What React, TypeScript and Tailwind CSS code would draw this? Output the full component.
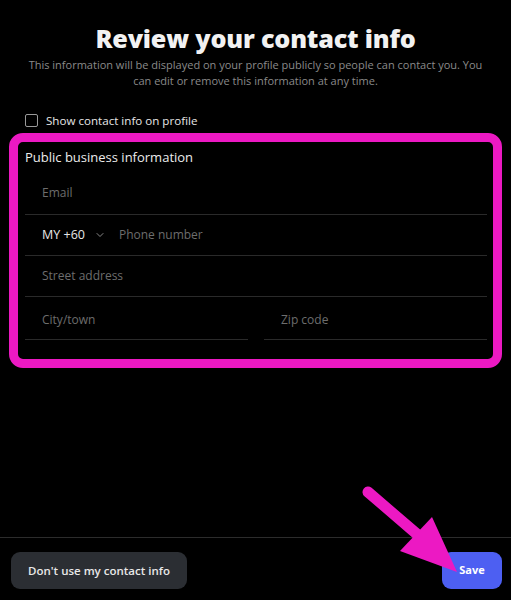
import { ChevronDown } from "lucide-react";

const font = { fontFamily: '"Open Sans", "Noto Sans", sans-serif' };

const Field = ({ label, className = "" }: { label: string; className?: string }) => {
  return (
    <div className={`flex h-[41px] items-center border-b border-[#2a2a2a] pl-[17px] ${className}`}>
      <span className="text-[12px] text-[#6d6d6d]">{label}</span>
    </div>
  );
};

export default function App() {
  return (
    <div className="relative flex h-[600px] w-[511px] flex-col bg-black text-white" style={font}>
      <div className="flex flex-col items-center pt-[21px]">
        <h1 className="text-[25.2px] leading-[34px] font-extrabold tracking-[-0.2px] text-[#f2f2f2]">
          Review your contact info
        </h1>
        <p className="mt-[2px] w-[460px] text-center text-[11px] leading-[16px] text-[#8a8a8a]">
          This information will be displayed on your profile publicly so people can contact you. You
          can edit or remove this information at any time.
        </p>
      </div>

      <label className="mt-[23px] ml-[25px] flex items-center gap-[8px]">
        <span className="h-[13px] w-[13px] rounded-[2px] border border-[#9a9a9a]" />
        <span className="text-[11.6px] text-[#e6e6e6]">Show contact info on profile</span>
      </label>

      <div className="mx-[9px] mt-[4px] rounded-[14px] border-[9px] border-[#ec19c3] pt-[6px] pr-[6px] pb-[19px] pl-[7px]">
        <div className="text-[13px] text-[#ececec]">Public business information</div>
        <Field label="Email" className="mt-[5px] h-[42px]" />
        <div className="flex h-[41px] items-center border-b border-[#2a2a2a] pl-[17px]">
          <span className="text-[12.5px] text-[#e6e6e6]">MY +60</span>
          <ChevronDown className="ml-[9px] h-[12px] w-[12px] text-[#9a9a9a]" strokeWidth={1.75} />
          <span className="ml-[13px] text-[12px] text-[#6d6d6d]">Phone number</span>
        </div>
        <Field label="Street address" />
        <div className="grid grid-cols-2 gap-[16px]">
          <Field label="City/town" className="h-[43px] items-end pb-[10px]" />
          <Field label="Zip code" className="h-[43px] items-end pb-[10px]" />
        </div>
      </div>

      <div className="mt-auto flex items-center justify-between border-t border-[#2c2c2c] pt-[14px] pr-[9px] pb-[11px] pl-[11px]">
        <button className="h-[37px] w-[176px] rounded-[9px] bg-[#2b2e33] text-[11.5px] font-semibold text-[#e8e8e8]">
          Don't use my contact info
        </button>
        <button className="h-[37px] w-[60px] rounded-[9px] bg-[#4d5ff2] text-[11px] font-bold text-white">
          Save
        </button>
      </div>

      <svg className="pointer-events-none absolute top-[485px] left-[360px]" width="110" height="100" viewBox="0 0 110 100">
        <line x1="8" y1="7" x2="58" y2="50" stroke="#ec19c3" strokeWidth="11" strokeLinecap="round" />
        <polygon points="40,66 72,32 97,87" fill="#ec19c3" />
      </svg>
    </div>
  );
}
